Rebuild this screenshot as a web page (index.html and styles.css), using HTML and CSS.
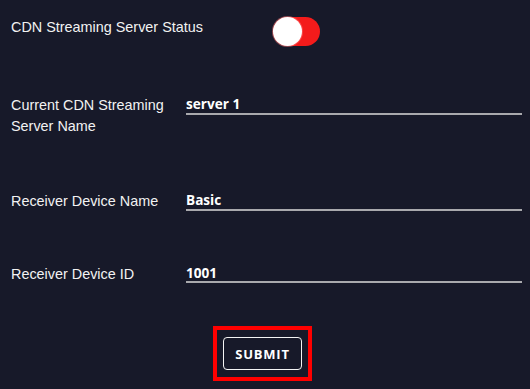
FILE: index.html
```html
<!DOCTYPE html>
<html>
<head>
<meta charset="utf-8">
<link rel="stylesheet" href="styles.css">
</head>
<body>
<form class="settings">
  <div class="row row-status">
    <div class="label nowrap">CDN Streaming Server Status</div>
    <div class="toggle"><span class="knob"></span></div>
  </div>
  <div class="row row-server">
    <div class="label">Current CDN Streaming<br>Server Name</div>
    <div class="value">server 1</div>
  </div>
  <div class="row row-device">
    <div class="label">Receiver Device Name</div>
    <div class="value">Basic</div>
  </div>
  <div class="row row-id">
    <div class="label">Receiver Device ID</div>
    <div class="value">1001</div>
  </div>
  <div class="footer">
    <div class="highlight">
      <button type="button" class="submit">SUBMIT</button>
    </div>
  </div>
</form>
</body>
</html>
```
FILE: styles.css
```css
html, body {
  margin: 0;
  background: #171929;
}
body {
  width: 530px;
  height: 389px;
  overflow: hidden;
}
.settings {
  padding: 17px 8px 0 11px;
  display: flex;
  flex-direction: column;
}
.row {
  display: flex;
  align-items: flex-start;
}
.label {
  width: 175px;
  flex: none;
  font-family: "Liberation Sans", Arial, sans-serif;
  font-size: 14.4px;
  line-height: 20.5px;
  color: #f2f2f2;
}
.nowrap {
  white-space: nowrap;
}
.value {
  flex: 1;
  margin-top: 1px;
  font-family: "Open Sans", sans-serif;
  font-weight: 700;
  font-size: 13.6px;
  line-height: 16.5px;
  color: #ffffff;
  border-bottom: 2px solid #a9a9ad;
}
.row-server { margin-top: 49px; }
.row-device { margin-top: 55px; }
.row-id { margin-top: 52px; }

.toggle {
  margin-left: 87px;
  width: 47px;
  height: 29px;
  border-radius: 15px;
  background: #f41b1b;
  position: relative;
}
.knob {
  position: absolute;
  left: 0;
  top: 0;
  width: 29px;
  height: 29px;
  border-radius: 50%;
  background: #ffffff;
  box-shadow: 0 0 0 1px rgba(255, 120, 120, 0.5);
}
.footer {
  margin-top: 42px;
  display: flex;
  justify-content: center;
  padding-right: 8px;
}
.highlight {
  border: 4px solid #ff0000;
  padding: 7px 6px;
}
.submit {
  display: block;
  width: 79px;
  height: 33px;
  margin: 0;
  padding: 0;
  background: transparent;
  border: 1.5px solid #f4f4f4;
  border-radius: 4px;
  color: #ffffff;
  font-family: "Open Sans", sans-serif;
  font-weight: 700;
  font-size: 13px;
  letter-spacing: 0.8px;
  line-height: 30px;
  text-align: center;
}
```
